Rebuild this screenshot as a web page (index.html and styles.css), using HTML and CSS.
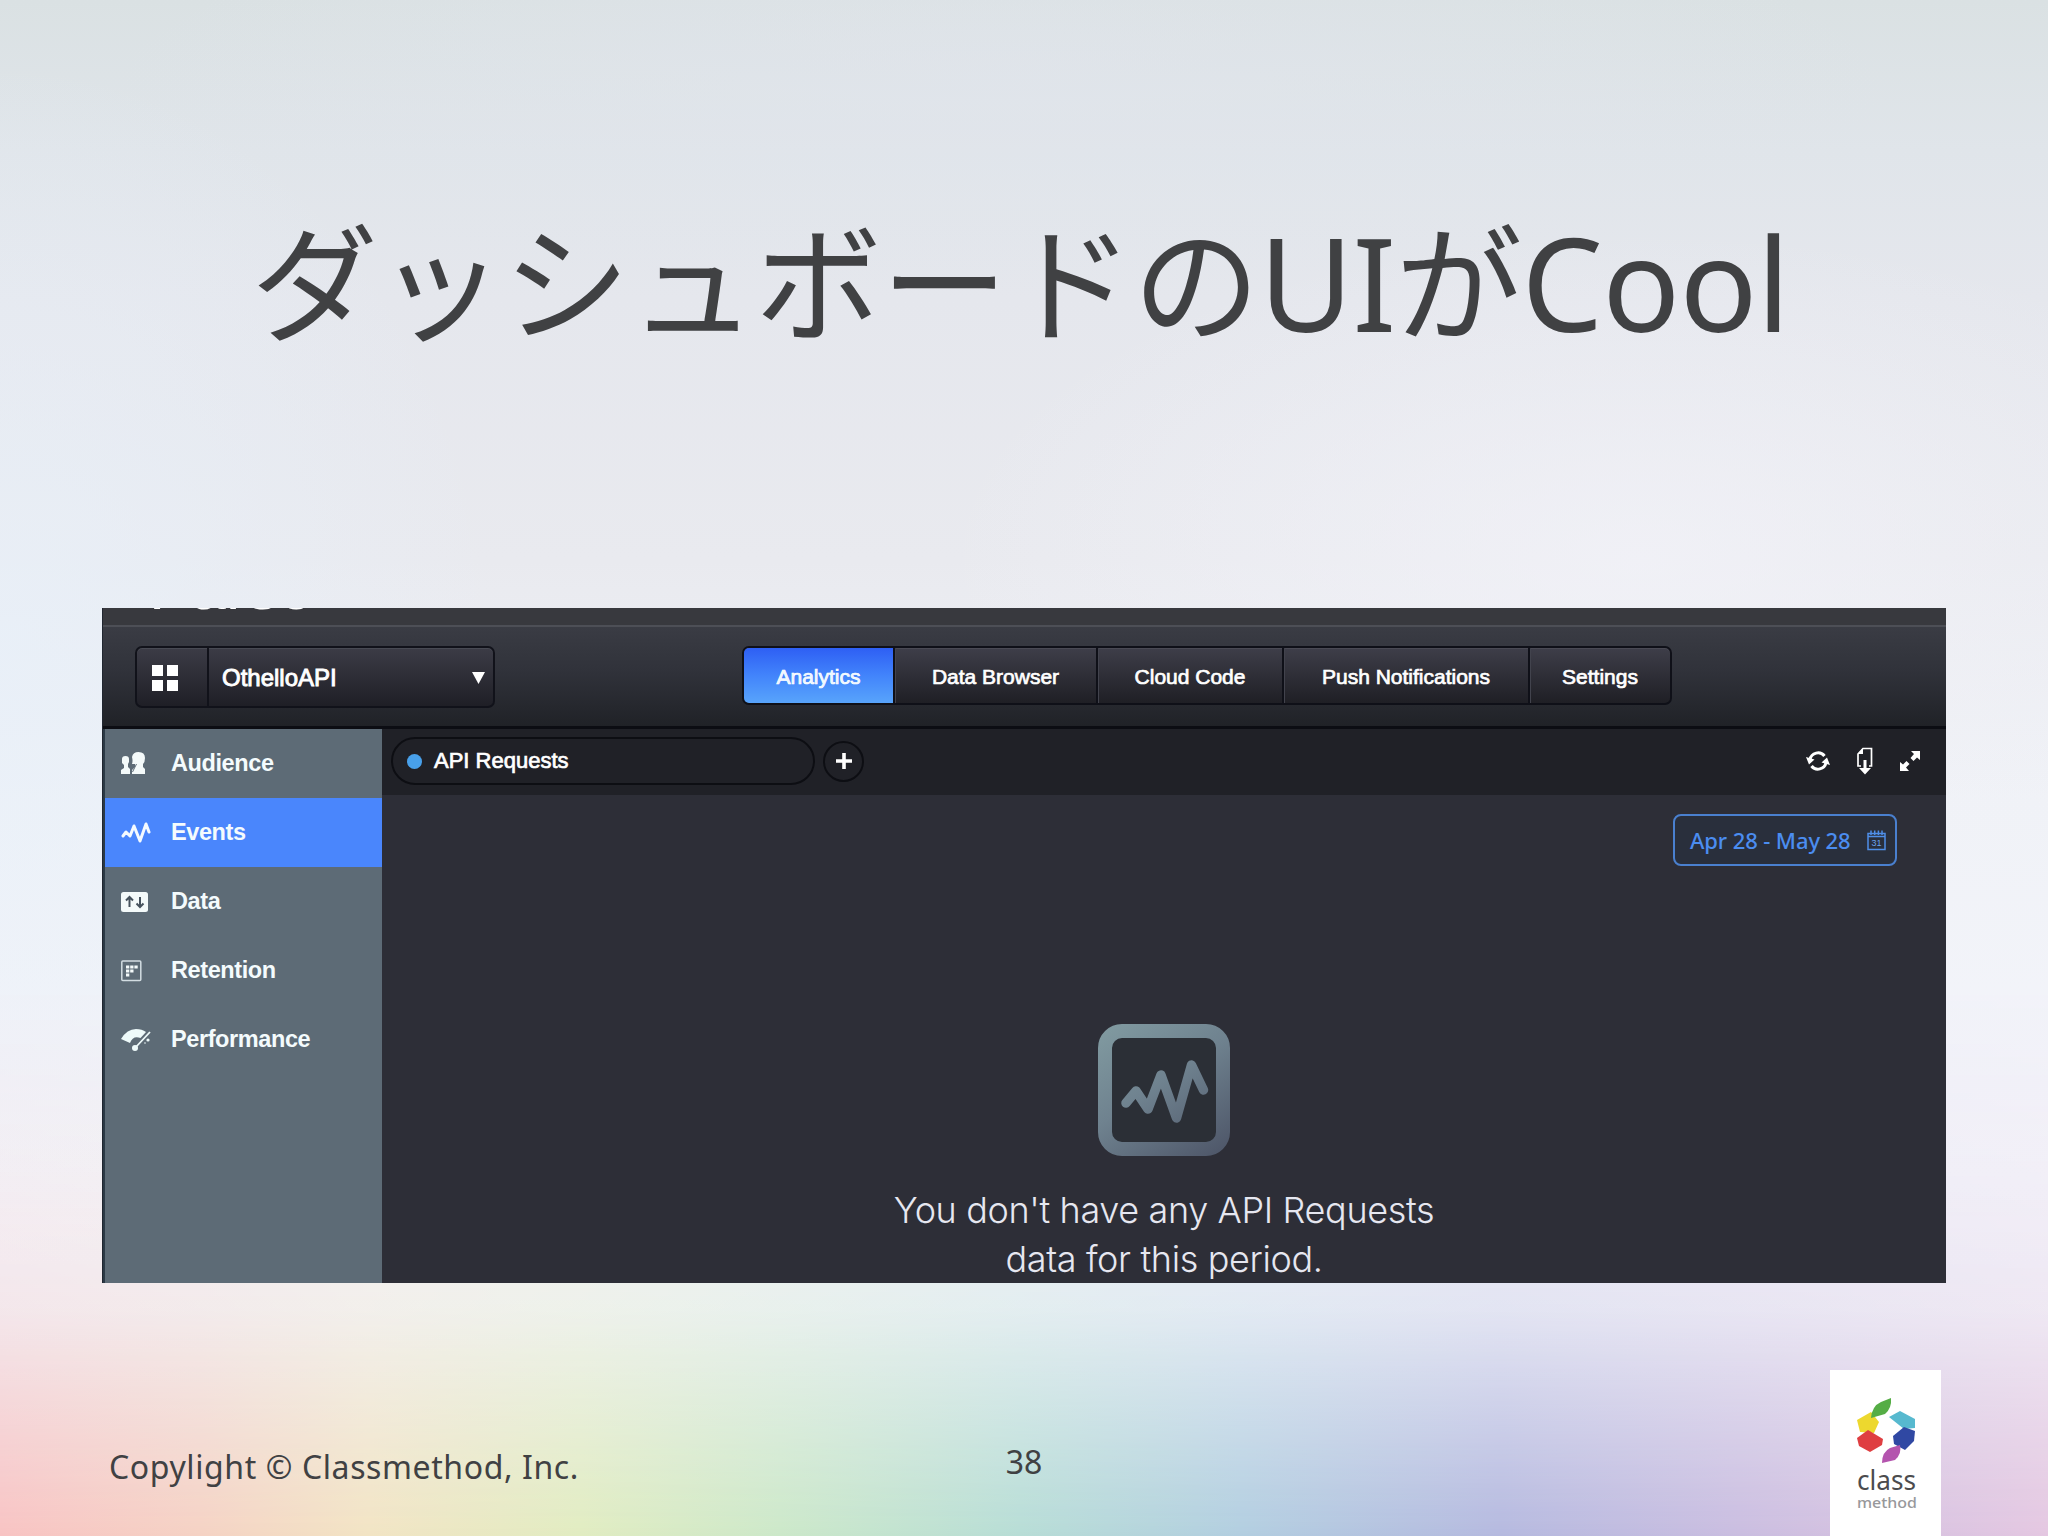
FILE: index.html
```html
<!DOCTYPE html>
<html lang="ja">
<head>
<meta charset="utf-8">
<title>ダッシュボードのUIがCool</title>
<link rel="stylesheet" href="styles.css">
</head>
<body>
<main class="slide">
  <h1 class="title"><span class="kana">ダッシュボードの</span><span class="ui">UI</span><span class="kana">が</span><span class="cool">Cool</span></h1>

  <section class="shot">
    <div class="brandbar"><span class="brand">Parse</span></div>
    <header class="header">
      <div class="picker">
        <div class="picker-grid"><svg width="26" height="26" viewBox="0 0 26 26"><path fill="#fff" d="M0 0h11v11H0zM15 0h11v11H15zM0 15h11v11H0zM15 15h11v11H15z"/></svg></div>
        <div class="picker-name"><span>OthelloAPI</span><svg width="13" height="12" viewBox="0 0 13 12"><path fill="#fff" d="M0 0h13L6.500 12z"/></svg></div>
      </div>
      <nav class="tabs">
        <a class="tab tab-analytics active">Analytics</a>
        <a class="tab tab-data">Data Browser</a>
        <a class="tab tab-cloud">Cloud Code</a>
        <a class="tab tab-push">Push Notifications</a>
        <a class="tab tab-settings">Settings</a>
      </nav>
    </header>
    <div class="body">
      <aside class="sidebar">
        <a class="item"><svg width="30" height="24" viewBox="0 0 30 24"><path fill="#f4fafa" d="M1 7q0-3 3.500-3T8 7v3L7 12v3l2 2v5H0v-4l3-2v-3L1 11zM11 5q1-5 6.500-5 6.500 0 6.500 6 0 4-2 6v3l2 2v5H11v-4l3-3v-3h-3q1-3 0-7z"/><path d="M15.500 12l-4 8" stroke="#5d6b76" stroke-width="1"/></svg><span>Audience</span></a>
        <a class="item on"><svg width="30" height="24" viewBox="0 0 30 24"><path fill="none" stroke="#f4faff" stroke-width="3" stroke-linejoin="round" stroke-linecap="round" d="M2 15l3-4 4 4 4-10 6 15 6-17 3 8"/></svg><span>Events</span></a>
        <a class="item"><svg width="30" height="24" viewBox="0 0 30 24"><rect y="2" width="27" height="20" rx="2.500" fill="#f4fafa"/><path fill="none" stroke="#46525d" stroke-width="2" d="M8.500 17V7M5 10.500l3.500-3.500 3.500 3.500M19 7v10M15.500 13.500L19 17l3.500-3.500"/></svg><span>Data</span></a>
        <a class="item"><svg width="30" height="24" viewBox="0 0 30 24"><rect x=".8" y="2" width="19" height="19.500" rx="1" fill="none" stroke="#d3dde2" stroke-width="1.500"/><path fill="#f4fafa" d="M5 6.500h3.300v3H5zM9.200 6.500h3.300v3H9.200zM13.400 6.500h3.300v3h-3.300zM5 10.500h3.300v3H5zM9.200 10.500h3.300v3H9.200zM5 14.500h3.300v3H5z"/></svg><span>Retention</span></a>
        <a class="item"><svg width="30" height="24" viewBox="0 0 30 24"><path fill="#eefafa" d="M0 11Q6 1 15 1q6 0 10 3l-5.500 6Q12 7 9 15z"/><circle cx="14" cy="20" r="3" fill="#eefafa"/><path stroke="#eefafa" stroke-width="1.800" d="M14 20L29 4"/><circle cx="27" cy="12" r="1.600" fill="#eefafa"/><circle cx="24" cy="15" r=".8" fill="#eefafa"/></svg><span>Performance</span></a>
      </aside>
      <div class="content">
        <div class="toolbar">
          <div class="pill"><i class="dot"></i><span>API Requests</span></div>
          <div class="add"><svg width="16" height="16" viewBox="0 0 16 16"><path stroke="#fff" stroke-width="3.600" d="M8 0v16M0 8h16"/></svg></div>
          <div class="tools">
            <svg width="24" height="24" viewBox="0 0 24 24"><path fill="none" stroke="#fff" stroke-width="3" d="M4 10.500A8.200 8.200 0 0 1 18.500 7M20 13.500A8.200 8.200 0 0 1 5.500 17"/><path fill="#fff" d="M0 8l8.500 2.500L3 15.500zM24 16l-8.500-2.500L21 8.500z"/></svg>
            <svg width="18" height="28" viewBox="0 0 18 28"><path fill="none" stroke="#fff" stroke-width="1.700" d="M5 19H2V7l5-5.500h8.500V19H13"/><path fill="#fff" d="M2 7l5-6v6zM7.500 13h3v8H15l-6 6.500L3 21h4.500z"/></svg>
            <svg width="20" height="20" viewBox="0 0 20 20"><path fill="#fff" d="M11 0h9v9l-3-2.500-3.500 3.500-3-3L14 3zM0 11l3 2.500L6.500 10l3 3L6 16.500l3 3.500H0z"/></svg>
          </div>
        </div>
        <div class="range"><span>Apr 28 - May 28</span>
          <svg width="19" height="22" viewBox="0 0 19 22"><path fill="none" stroke="#4f8fe8" stroke-width="1.500" d="M1 4.500h17v16H1zM1 7.500h17M4 6V1.500M7.700 6V1.500M11.400 6V1.500M15 6V1.500"/><text class="cal" x="9.500" y="17">31</text></svg>
        </div>
        <div class="empty">
          <svg width="132" height="132" viewBox="0 0 132 132">
            <defs><linearGradient id="steel" gradientUnits="userSpaceOnUse" x1="20" y1="0" x2="112" y2="132"><stop offset="0" stop-color="#7f989f"/><stop offset=".45" stop-color="#6f828f"/><stop offset="1" stop-color="#50596b"/></linearGradient></defs>
            <rect x="7" y="7" width="118" height="118" rx="17" fill="#2b2f36" stroke="url(#steel)" stroke-width="14"/>
            <path fill="none" stroke="url(#steel)" stroke-width="9.500" stroke-linecap="round" stroke-linejoin="round" d="M28 79l10-12 12 18 13-34 15.500 43 15-53 12 25"/>
          </svg>
          <p>You don't have any API Requests<br><span>data for this period.</span></p>
        </div>
      </div>
    </div>
  </section>

  <footer class="footer">
    <div class="copy">Copylight © Classmethod, Inc.</div>
    <div class="page">38</div>
    <div class="logo">
      <svg width="111" height="166" viewBox="0 0 111 166">
        <path fill="#edd82e" d="M27 50l14-8 8 10-5 11-14-1z"/>
        <path fill="#55ad45" d="M41 48q1-12 10-16l10-4q1 10-6 16z"/>
        <path fill="#57b9cf" d="M59 47l11-6 15 8v9l-11 1z"/>
        <path fill="#3048a3" d="M63 66l11-9 11 4-1 10-9 9-11-6z"/>
        <path fill="#df3e41" d="M27 68l11-8 15 9-1 6-12 7-11-6z"/>
        <path fill="#b454ae" d="M52 93q0-11 8-15l10-3q2 9-5 15z"/>
        <text class="logo-a" x="27" y="120" textLength="59" lengthAdjust="spacingAndGlyphs">class</text>
        <text class="logo-b" x="27" y="138" textLength="60" lengthAdjust="spacingAndGlyphs">method</text>
      </svg>
    </div>
  </footer>
</main>
</body>
</html>
```
FILE: styles.css
```css
* { box-sizing: border-box; }
body { margin: 0; }
svg { display: block; flex: none; }

.slide {
  position: relative;
  isolation: isolate;
  width: 2048px;
  height: 1536px;
  overflow: hidden;
  display: flex;
  flex-direction: column;
  color: #404143;
  font-family: "Noto Sans", "Noto Sans CJK JP", sans-serif;
  background:
    radial-gradient(ellipse 700px 330px at 1640px 560px, rgba(243,243,249,.7), rgba(243,243,249,0)),
    radial-gradient(ellipse 500px 600px at 0 660px, rgba(232,240,249,.8), rgba(232,240,249,0)),
    radial-gradient(ellipse 900px 200px at 1000px 90px, rgba(225,229,236,.7), rgba(225,229,236,0)),
    linear-gradient(#dae1e3 0, #e0e5ea 150px, #e5e7ed 300px, #e9eaef 560px, #f0f2f7 800px, #f4f5fb 1180px, #f0f1f7 1536px);
}
.slide::before {
  content: "";
  position: absolute;
  z-index: -1;
  inset: 980px 0 0;
  background: linear-gradient(90deg, #f8c3c3 0, #f5d2c4 200px, #f2e4c4 370px, #e1ecc1 580px, #cce8c9 780px, #b7ddd6 1020px, #b2cee0 1240px, #b5b9df 1500px, #cabde0 1740px, #e4c7e1 2048px);
  -webkit-mask-image: linear-gradient(transparent, rgba(0,0,0,.12) 190px, rgba(0,0,0,.26) 330px, rgba(0,0,0,.66) 450px, #000);
  mask-image: linear-gradient(transparent, rgba(0,0,0,.12) 190px, rgba(0,0,0,.26) 330px, rgba(0,0,0,.66) 450px, #000);
}

.title {
  margin: 0;
  height: 608px;
  padding: 187px 0 0 251px;
  display: flex;
  align-items: baseline;
  font-weight: 400;
  font-size: 129px;
  line-height: 180px;
  letter-spacing: -.8px;
  white-space: nowrap;
}
.kana { font-family: "Noto Sans CJK JP", sans-serif; font-size: 127px; letter-spacing: -1px; }

.shot {
  width: 1844px;
  height: 675px;
  margin-left: 102px;
  flex: none;
  display: flex;
  flex-direction: column;
  overflow: hidden;
  color: #fff;
  background: #2d2e37;
  border-left: 1px solid #202630;
  font-family: "Liberation Sans", Arial, sans-serif;
}
.brandbar {
  height: 17px;
  flex: none;
  overflow: hidden;
  background: #38393e;
  position: relative;
}
.brand { position: absolute; left: 46px; top: -56px; font-size: 63px; line-height: 70px; }
.header {
  height: 104px;
  flex: none;
  display: flex;
  align-items: flex-start;
  padding: 21px 0 0 32px;
  border-top: 2px solid #4d4f56;
  border-bottom: 3px solid #0c0d13;
  background: linear-gradient(#3a3c44, #30323a 45%, #202227);
}
.picker {
  width: 360px;
  height: 62px;
  margin-top: -2px;
  display: flex;
  border: 2px solid #11121a;
  border-radius: 7px;
  background: linear-gradient(#3c3c46, #1f1f26);
  box-shadow: inset 0 1px #484a53;
}
.picker-grid { width: 72px; padding: 17px 0 0 15px; border-right: 2px solid #11121a; }
.picker-name { flex: 1; display: flex; align-items: center; justify-content: space-between; padding: 1px 8px 0 13px; font-size: 24px; -webkit-text-stroke: .9px #fff; }
.tabs {
  margin-left: 247px;
  width: 930px;
  height: 59px;
  margin-top: -2px;
  display: flex;
  border: 2px solid #0f1018;
  border-radius: 7px;
  overflow: hidden;
  font-size: 21px;
  background: linear-gradient(#3e3e49, #1f1f25);
  box-shadow: inset 0 1px #4a4a54;
}
.tab { display: flex; align-items: center; justify-content: center; padding-top: 3px; border-right: 2px solid #0f1018; box-shadow: inset 1px 0 #42434d; -webkit-text-stroke: .7px #fff; }
.tab:last-child { border-right: 0; }
.tab.active { color: #e8f6ff; box-shadow: none; background: linear-gradient(#2e5ff4, #4284fb 50%, #58a4fb); }
.tab-analytics { width: 151px; }
.tab-data { width: 203px; }
.tab-cloud { width: 186px; }
.tab-push { width: 246px; }
.tab-settings { flex: 1; }

.body { flex: 1; display: flex; min-height: 0; }
.sidebar { width: 279px; flex: none; background: #5d6b76; border-left: 2px solid #2b3945; }
.item { height: 69px; display: flex; align-items: center; gap: 20px; padding-left: 16px; font-size: 23.500px; font-weight: 700; letter-spacing: -.4px; color: #f4fbfd; }
.item.on { background: #4a86fc; }
.content { flex: 1; display: flex; flex-direction: column; align-items: stretch; }
.toolbar { height: 66px; flex: none; display: flex; align-items: center; padding: 0 26px 2px 9px; background: #202127; }
.pill { width: 424px; height: 48px; display: flex; align-items: center; gap: 12px; padding-left: 14px; border: 2px solid #0d0e13; border-radius: 24px; background: #202127; font-size: 22px; -webkit-text-stroke: .7px #fff; }
.dot { width: 15px; height: 15px; border-radius: 50%; background: #48a0ea; }
.add { width: 41px; height: 41px; margin-left: 8px; display: grid; place-items: center; border: 2px solid #0d0e13; border-radius: 50%; }
.tools { margin-left: auto; display: flex; align-items: center; gap: 26px; }
.range {
  align-self: flex-end;
  width: 224px;
  height: 53px;
  margin: 19px 49px 0 0;
  padding: 0 9px 0 15px;
  display: flex;
  align-items: center;
  justify-content: space-between;
  border: 2px solid #4a80cf;
  border-radius: 8px;
  background: #292f3c;
  color: #4b8df0;
  font: 500 22px "Noto Sans", sans-serif;
  letter-spacing: -.1px;
  white-space: nowrap;
}
.cal { font: 9px "Liberation Sans", sans-serif; fill: #6aa2ee; text-anchor: middle; }
.empty { margin-top: 158px; display: flex; flex-direction: column; align-items: center; }
.empty p { margin: 30px 0 0; font: 300 36px/48.500px Inter, sans-serif; letter-spacing: -.36px; text-align: center; color: #e6e7f0; white-space: nowrap; }

.footer { flex: 1; display: flex; align-items: flex-start; font-size: 32px; line-height: 44px; }
.copy { width: 894px; padding: 162px 0 0 109px; letter-spacing: .6px; white-space: nowrap; }
.page { width: 260px; text-align: center; padding-top: 157px; }
.logo { margin: 87px 0 0 676px; width: 111px; height: 166px; background: #fff; }
.logo-a { font: 27px "Noto Sans", sans-serif; fill: #4c4c4e; }
.logo-b { font: 500 15px "Noto Sans", sans-serif; fill: #98989b; }
```
